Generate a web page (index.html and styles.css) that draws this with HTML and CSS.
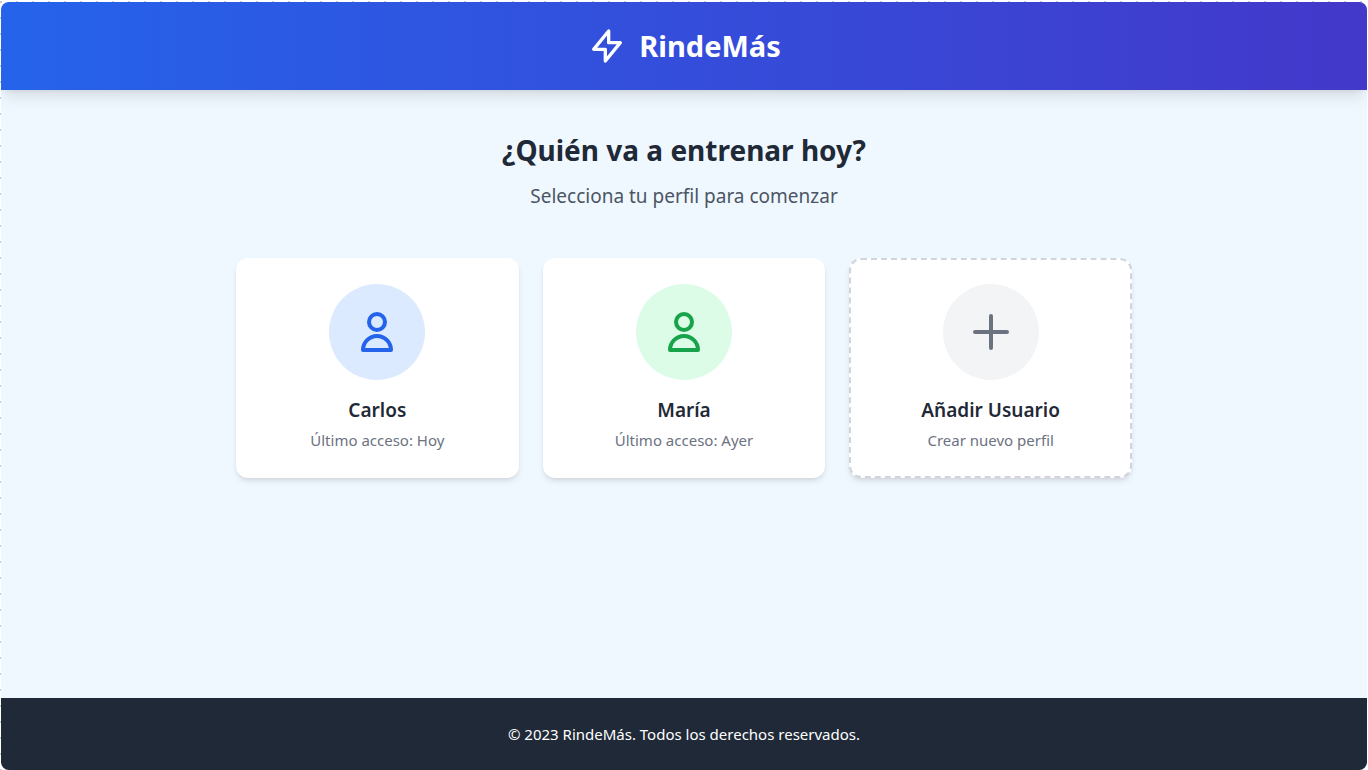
FILE: index.html
```html
<!DOCTYPE html>
<html lang="es">
<head>
<meta charset="utf-8">
<meta name="viewport" content="width=device-width, initial-scale=1">
<title>RindeMás</title>
<link rel="stylesheet" href="styles.css">
</head>
<body>
<div class="app">
  <header class="header">
    <svg class="logo" viewBox="0 0 24 24" aria-hidden="true"><path d="M13 10V3L4 14h7v7l9-11h-7z"/></svg>
    <h1 class="brand">RindeMás</h1>
  </header>
  <main class="main">
    <h2 class="title">¿Quién va a entrenar hoy?</h2>
    <p class="subtitle">Selecciona tu perfil para comenzar</p>
    <div class="profiles">
      <button type="button" class="card">
        <span class="avatar avatar-blue">
          <svg class="icon" viewBox="0 0 24 24" aria-hidden="true"><path d="M16 7a4 4 0 11-8 0 4 4 0 018 0zM12 14a7 7 0 00-7 7h14a7 7 0 00-7-7z"/></svg>
        </span>
        <span class="name">Carlos</span>
        <span class="note">Último acceso: Hoy</span>
      </button>
      <button type="button" class="card">
        <span class="avatar avatar-green">
          <svg class="icon" viewBox="0 0 24 24" aria-hidden="true"><path d="M16 7a4 4 0 11-8 0 4 4 0 018 0zM12 14a7 7 0 00-7 7h14a7 7 0 00-7-7z"/></svg>
        </span>
        <span class="name">María</span>
        <span class="note">Último acceso: Ayer</span>
      </button>
      <button type="button" class="card card-add">
        <span class="avatar avatar-gray">
          <svg class="icon" viewBox="0 0 24 24" aria-hidden="true"><path d="M12 4v16m8-8H4"/></svg>
        </span>
        <span class="name">Añadir Usuario</span>
        <span class="note">Crear nuevo perfil</span>
      </button>
    </div>
  </main>
  <footer class="footer">© 2023 RindeMás. Todos los derechos reservados.</footer>
</div>
</body>
</html>
```
FILE: styles.css
```css
*, *::before, *::after { box-sizing: border-box; }

body {
  margin: 0;
  min-height: 100vh;
  display: flex;
  padding: 2px 1px 0;
  font-family: "Segoe UI", "Noto Sans", "Open Sans", sans-serif;
  color: #1f2937;
  background-color: #fff;
  background-image: conic-gradient(from 270deg at 2px 2px, #c8cad0 90deg, transparent 90deg);
  background-size: 16px 16px;
  background-position: 0 1px;
}

h1, h2, p { margin: 0; }

svg {
  fill: none;
  stroke: currentColor;
  stroke-width: 2;
  stroke-linecap: round;
  stroke-linejoin: round;
}

.app {
  flex: 1;
  display: flex;
  flex-direction: column;
  overflow: hidden;
  border-radius: 8px;
  background: #f0f8ff;
}

.header {
  display: flex;
  align-items: center;
  justify-content: center;
  gap: 12px;
  padding: 24px;
  color: #fff;
  background: linear-gradient(90deg, #2563eb, #4338ca);
  box-shadow: 0 10px 15px -3px rgba(0, 0, 0, 0.1), 0 4px 6px -4px rgba(0, 0, 0, 0.1);
}

.logo { width: 40px; height: 40px; }

.brand { font-size: 29px; line-height: 40px; font-weight: 700; }

.main {
  flex: 1;
  padding: 40px 16px;
  text-align: center;
}

.title { font-size: 28px; line-height: 40px; font-weight: 700; }

.subtitle {
  margin-top: 12px;
  font-size: 19px;
  line-height: 28px;
  color: #4b5563;
}

.profiles {
  display: grid;
  grid-template-columns: repeat(auto-fit, minmax(240px, 1fr));
  gap: 24px;
  max-width: 896px;
  margin: 48px auto 0;
}

.card {
  display: flex;
  flex-direction: column;
  align-items: center;
  padding: 24px;
  border: 2px solid transparent;
  border-radius: 12px;
  background: #fff;
  font-family: inherit;
  color: inherit;
  cursor: pointer;
  box-shadow: 0 4px 6px -1px rgba(0, 0, 0, 0.1), 0 2px 4px -2px rgba(0, 0, 0, 0.1);
}

.card-add { border: 2px dashed #d1d5db; }

.avatar {
  display: flex;
  align-items: center;
  justify-content: center;
  width: 96px;
  height: 96px;
  margin-bottom: 16px;
  border-radius: 50%;
}

.avatar-blue { color: #2563eb; background: #dbeafe; }
.avatar-green { color: #16a34a; background: #dcfce7; }
.avatar-gray { color: #6b7280; background: #f3f4f6; }

.icon { width: 48px; height: 48px; }

.name { font-size: 19px; line-height: 28px; font-weight: 600; }

.note {
  margin-top: 4px;
  font-size: 15px;
  line-height: 24px;
  color: #6b7280;
}

.footer {
  padding: 24px;
  text-align: center;
  font-size: 15px;
  line-height: 24px;
  color: #fff;
  background: #1f2937;
}
```
